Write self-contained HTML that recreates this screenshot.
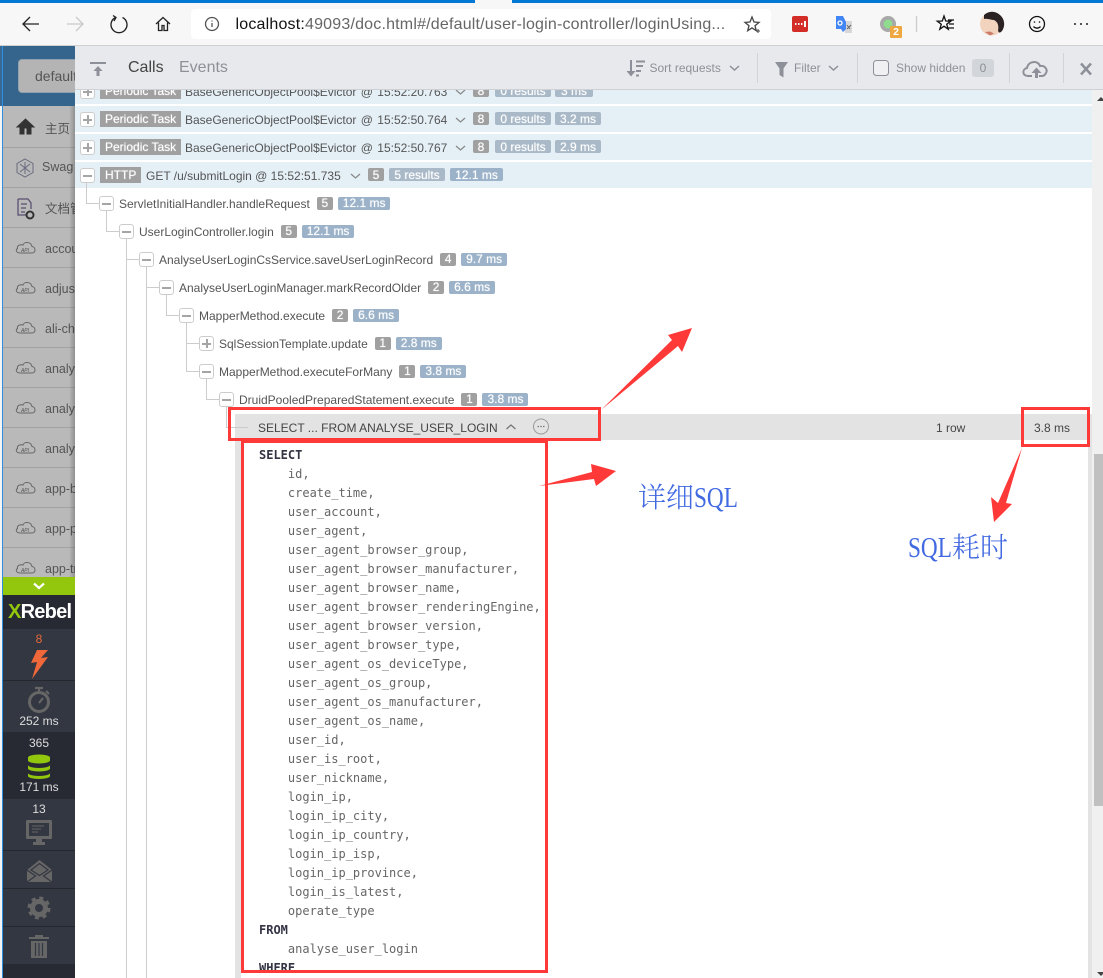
<!DOCTYPE html>
<html><head><meta charset="utf-8"><style>
html,body{margin:0;padding:0;background:#fff}
#p{position:relative;width:1103px;height:978px;overflow:hidden;font-family:"Liberation Sans","Noto Sans CJK SC",sans-serif;font-size:12px;color:#555;background:#fff}
.a{position:absolute;white-space:nowrap}
.r{position:absolute;left:75px;width:1017px;height:26px;background:#e4eff6}
.t{position:absolute;white-space:nowrap;font-size:12px;line-height:14px;color:#555}
.b{position:absolute;top:0;height:13px;line-height:14px;border-radius:2px;padding:0 5px;font-size:12px;color:#fff;background:#a0a0a0;text-shadow:0 0 1px rgba(255,255,255,.7);text-align:center;box-sizing:border-box}
.bi{position:static;display:inline-block;vertical-align:1px;margin-left:4px;line-height:13px}
.n{width:16px;padding:0}
.g{background:#a9b9c8}
.s{background:#9bb2c9}
.tag{position:absolute;background:#a0a0a0;color:#fff;height:16px;line-height:16px;padding:0 5px;text-shadow:0 0 1px rgba(255,255,255,.7);font-size:12px;white-space:nowrap}
.tg{position:absolute;width:15px;height:15px;border:1px solid #ccc;border-radius:3px;background:#fff;box-sizing:border-box}
.tg:before{content:"";position:absolute;left:2px;right:2px;top:5.5px;height:2px;background:#a5a5a5}
.pl:after{content:"";position:absolute;top:2px;bottom:2px;left:5.5px;width:2px;background:#a5a5a5}
.v{position:absolute;width:1px;background:#ccc}
.h{position:absolute;height:1px;background:#ccc}
.it{position:absolute;left:3px;width:72px;height:39px;border-bottom:1px solid #a2a2a2;overflow:hidden}
.it span{position:absolute;left:42px;top:14px;font-size:12.5px;color:#555;white-space:nowrap}
.sql{position:absolute;left:259px;font:12px/19px "DejaVu Sans Mono","Liberation Mono",monospace;color:#666;white-space:pre;margin:0}
.sql b{font-weight:bold;color:#334}
.red{position:absolute;border:3px solid #ff3838;box-sizing:border-box}
.cn{position:absolute;font-family:"Noto Serif CJK SC",serif;font-size:28px;line-height:36px;color:#4169e1;white-space:nowrap;font-weight:300}
.cn i{display:inline-block;width:44px;font:28px/36px "Liberation Serif",serif;transform:scaleX(.83);transform-origin:left center}
.lab{position:absolute;width:72px;left:3px;text-align:center;color:#ddd;font-size:12px;line-height:14px}
</style></head><body><div id="p">

<!-- browser chrome -->
<div class="a" style="left:0;top:0;width:1103px;height:3px;background:#0078d4"></div>
<div class="a" style="left:475px;top:0;width:37px;height:3px;background:#f7f7f7"></div>
<div class="a" style="left:0;top:3px;width:1103px;height:43px;background:#f7f7f7;border-bottom:1px solid #d0d0d0;box-sizing:border-box"></div>
<div class="a" style="left:191px;top:9px;width:580px;height:30px;background:#fff;border-radius:4px"></div>
<div class="a" style="left:235.500px;top:15px;font-size:16px;line-height:20px;color:#666;letter-spacing:.19px"><span style="color:#111">localhost:</span>49093/doc.html#/default/user-login-controller/loginUsing...</div>
<svg class="a" style="left:0;top:0" width="1103" height="46" fill="none" stroke="#222" stroke-width="1.3">
<path d="M39 24H23M30 17l-7 7 7 7"/>
<path d="M83 24H67M76 17l7 7-7 7" stroke="#c8c8c8"/>
<path d="M115.500 17.500a8 8 0 1 0 7 0M113 15.500l3 2-2 3.500"/>
<path d="M156 24l7-6.500 7 6.500M158.500 22.500v8h3.500v-5h2v5h3.500v-8"/>
<circle cx="212" cy="24" r="6.500" stroke="#555"/><path d="M212 23v4M212 20.500v1" stroke="#555"/>
<path d="M752 17l2 5 5 .4-4 3.300 1.300 5-4.300-2.800-4.300 2.800 1.300-5-4-3.300 5-.4z" stroke="#444"/><path d="M758 29v4M756 31h4" stroke="#444" stroke-width="1"/>
<rect x="792" y="16" width="16" height="16" rx="2" fill="#d32d27" stroke="none"/>
<path d="M795 24h1.500M798 24h1.500M801 24h1.500M805 21v6" stroke="#fff" stroke-width="2"/>
<path d="M843 21h9v12h-7z" fill="#d8d8d8" stroke="none"/><path d="M836 16h7l3 6v7l-3 3-2-3h-5z" fill="#4285f4" stroke="none"/><circle cx="840" cy="23" r="2" stroke="#fff"/><path d="M847 25l3 4M851 25l-4 4" stroke="#666" stroke-width="1"/>
<circle cx="888" cy="24" r="8" fill="#a8a8a8" stroke="none"/><circle cx="888" cy="24" r="4.500" fill="#8fdc8f" stroke="none"/>
<rect x="890" y="26" width="12" height="12" rx="1" fill="#eea83f" stroke="none"/>
<path d="M916.500 16v16" stroke="#ccc"/>
<path d="M944 16l1.700 5 5 .2-4 3 1.500 5-4.200-3-4.200 3 1.500-5-4-3 5-.2z" fill="#fff" stroke="#111"/><path d="M948 20h6M949 24h5M948 28h6" stroke="#111"/>
<circle cx="991.500" cy="24" r="11.500" fill="#f2d3bd" stroke="none"/><path d="M984 15a11.500 11.500 0 0 1 16 0 12 12 0 0 1 2 16c-3 3-3 1-4 0 1-5 0-9-4-11-3 0-7-2-10-1z" fill="#2a2223" stroke="none"/><path d="M985 32l5 3.500 4-2-4-2z" fill="#cc7a6a" stroke="none"/>
<circle cx="1037" cy="24" r="7.500" stroke="#111"/><circle cx="1034.500" cy="22" r=".8" fill="#111" stroke="none"/><circle cx="1039.500" cy="22" r=".8" fill="#111" stroke="none"/><path d="M1033.500 26.500a4.500 4.500 0 0 0 7 0" stroke="#111"/>
<circle cx="1075" cy="24" r="1" fill="#222" stroke="none"/><circle cx="1081" cy="24" r="1" fill="#222" stroke="none"/><circle cx="1087" cy="24" r="1" fill="#222" stroke="none"/>
</svg>
<div class="a" style="left:890px;top:26px;width:12px;height:12px;color:#fff;font:bold 10.5px/12px 'Liberation Sans',sans-serif;text-align:center;">2</div>

<!-- sidebar -->
<div class="a" style="left:0;top:46px;width:75px;height:60px;background:#35648c"></div>
<div class="a" style="left:18px;top:59px;width:70px;height:34px;border-radius:4px;background:#b4b4b4;border:1px solid #8fa0ae;box-sizing:border-box"></div>
<div class="a" style="left:35px;top:67px;font-size:14px;line-height:18px;color:#555">default</div>
<div class="a" style="left:3px;top:106px;width:72px;height:471px;background:#b9b9b9"></div>
<div class="it" style="top:108px"><span style="left:42px;top:10px">主页</span></div>
<div class="it" style="top:148px"><span style="left:39px;top:12px">Swag</span></div>
<div class="it" style="top:188px"><span style="left:42px;top:10px">文档管</span></div>
<div class="it" style="top:228px"><span>accou</span></div>
<div class="it" style="top:268px"><span>adjust</span></div>
<div class="it" style="top:308px"><span>ali-che</span></div>
<div class="it" style="top:348px"><span>analys</span></div>
<div class="it" style="top:388px"><span>analys</span></div>
<div class="it" style="top:428px"><span>analys</span></div>
<div class="it" style="top:468px"><span>app-b</span></div>
<div class="it" style="top:508px"><span>app-p</span></div>
<div class="it" style="top:548px;border:0"><span>app-tr</span></div>
<svg class="a" style="left:0;top:106px" width="75" height="471" fill="none" stroke="#666" stroke-width="1">
<path d="M17 21l8.500-8 8.500 8h-3v7h-4v-6h-3v6h-4v-7z" fill="#333" stroke="#333"/>
<path d="M25 53l8 4.500v9l-8 4.500-8-4.500v-9zM20 58l10 8M30 58l-10 8M25 56v12" stroke="#6a6a80"/>
<path d="M18 93h10l3 4v6M18 93v16h8M21 98h6M21 102h5M21 106h4" stroke="#5c4f70" stroke-width="1.300"/><circle cx="30" cy="109" r="3.500" stroke="#333" stroke-width="2"/>
<g id="cl">
<path d="M20 147h12c4 0 4-6 0-6.500-1-5-8-5-9-1.500-4-1-6 1-5.500 3.500-2 1-1.500 4.500 2.500 4.500z"/>
<path d="M20 187h12c4 0 4-6 0-6.500-1-5-8-5-9-1.500-4-1-6 1-5.500 3.500-2 1-1.500 4.500 2.500 4.500z"/>
<path d="M20 227h12c4 0 4-6 0-6.500-1-5-8-5-9-1.500-4-1-6 1-5.500 3.500-2 1-1.500 4.500 2.500 4.500z"/>
<path d="M20 267h12c4 0 4-6 0-6.500-1-5-8-5-9-1.500-4-1-6 1-5.500 3.500-2 1-1.500 4.500 2.500 4.500z"/>
<path d="M20 307h12c4 0 4-6 0-6.500-1-5-8-5-9-1.500-4-1-6 1-5.500 3.500-2 1-1.500 4.500 2.500 4.500z"/>
<path d="M20 347h12c4 0 4-6 0-6.500-1-5-8-5-9-1.500-4-1-6 1-5.500 3.500-2 1-1.500 4.500 2.500 4.500z"/>
<path d="M20 387h12c4 0 4-6 0-6.500-1-5-8-5-9-1.500-4-1-6 1-5.500 3.500-2 1-1.500 4.500 2.500 4.500z"/>
<path d="M20 427h12c4 0 4-6 0-6.500-1-5-8-5-9-1.500-4-1-6 1-5.500 3.500-2 1-1.500 4.500 2.500 4.500z"/>
<path d="M20 467h12c4 0 4-6 0-6.500-1-5-8-5-9-1.500-4-1-6 1-5.500 3.500-2 1-1.500 4.500 2.500 4.500z"/>
</g>
<g font-family="Liberation Sans" font-size="5" font-style="italic" fill="#555" stroke="none" text-anchor="middle">
<text x="25" y="146">API</text><text x="25" y="186">API</text><text x="25" y="226">API</text><text x="25" y="266">API</text><text x="25" y="306">API</text><text x="25" y="346">API</text><text x="25" y="386">API</text><text x="25" y="426">API</text><text x="25" y="466">API</text>
</g>
</svg>
<div class="a" style="left:69px;top:106px;width:6px;height:471px;background:linear-gradient(to right,rgba(0,0,0,0),rgba(0,0,0,.22))"></div>
<div class="a" style="left:0;top:46px;width:2px;height:60px;background:#3a6a94"></div>
<div class="a" style="left:0;top:106px;width:2px;height:872px;background:#f4f4f4"></div>
<div class="a" style="left:2px;top:46px;width:1px;height:932px;background:#2e8fe0"></div>

<!-- XRebel -->
<div class="a" style="left:3px;top:594px;width:72px;height:384px;background:#333741"></div>
<div class="a" style="left:3px;top:595px;width:72px;height:34px;background:#272a32"></div>
<div class="a" style="left:3px;top:577px;width:72px;height:18px;background:#92c70e"></div>
<svg class="a" style="left:3px;top:577px" width="72" height="18" fill="none" stroke="#fff" stroke-width="2.200"><path d="M31 6.500l5 4.500 5-4.500"/></svg>
<div class="a" style="left:8px;top:601px;font:bold 20px/22px 'Liberation Sans',sans-serif;color:#fff;letter-spacing:-.75px"><span style="color:#92c70e">X</span>Rebel</div>
<div class="a" style="left:3px;top:680px;width:72px;height:1px;background:#24272e"></div>
<div class="a" style="left:3px;top:732px;width:72px;height:67px;background:#272a32"></div>
<div class="a" style="left:3px;top:850px;width:72px;height:1px;background:#24272e"></div>
<div class="a" style="left:3px;top:888px;width:72px;height:1px;background:#24272e"></div>
<div class="a" style="left:3px;top:926px;width:72px;height:1px;background:#24272e"></div>
<div class="a" style="left:3px;top:964px;width:72px;height:14px;background:#272a32"></div>
<div class="lab" style="top:632px;color:#e8683a;">8</div>
<div class="lab" style="top:714px;">252 ms</div>
<div class="lab" style="top:736px;">365</div>
<div class="lab" style="top:780px;">171 ms</div>
<div class="lab" style="top:802px;">13</div>
<svg class="a" style="left:0;top:594px" width="75" height="384" fill="none">
<path d="M48 56H37l-6 13 6-1-5 17 16-22-7 1z" fill="#f0673a"/>
<circle cx="39" cy="108" r="9.500" stroke="#666" stroke-width="3"/><path d="M35 94h8M39 94v4M46 97l3 3M43 104l-4 5" stroke="#666" stroke-width="2.200"/>
<path d="M28 163.500a11 3 0 0 1 22 0v3a11 3 0 0 1-22 0zM28 171a11 3 0 0 0 22 0v3.500a11 3 0 0 1-22 0zM28 179a11 3 0 0 0 22 0v3a11 3 0 0 1-22 0z" fill="#92c70e"/>
<rect x="26" y="226" width="26" height="19" rx="1" fill="#666"/><rect x="29" y="229" width="20" height="13" fill="#333741"/><path d="M32 232h12M32 235h9M32 238h6" stroke="#666"/><path d="M36 245h6v3h3v3H33v-3h3z" fill="#666"/>
<path d="M27 276l12.500-10 12.500 10v12H27z" fill="#666"/><path d="M31 276l8.500-6.500 8.500 6.500-8.500 5.500zM27 276l8.500 6-8.500 6M52 276l-8.500 6 8.500 6" stroke="#333741" stroke-width="1.200"/>
<circle cx="39" cy="314" r="6.500" stroke="#666" stroke-width="5"/><circle cx="39" cy="314" r="10" stroke="#666" stroke-width="3" stroke-dasharray="4 3.850"/>
<path d="M29 343h20v2H29zM35 341h8v2h-8zM31 347h16v17H31z" fill="#666"/><path d="M35.500 349v13M39 349v13M42.500 349v13" stroke="#333741" stroke-width="1.200"/>
</svg>

<!-- panel -->
<div class="a" style="left:75px;top:46px;width:1028px;height:932px;background:#fff"></div>

<div class="r" style="top:78px"></div>
<div class="r" style="top:106px"></div>
<div class="r" style="top:134px"></div>
<div class="r" style="top:162px"></div>
<div class="a" style="left:75px;top:104px;width:1017px;height:2px;background:#fff"></div>

<div class="t" style="left:0;top:84px;width:700px;height:14px">
<span class="tag" style="left:100px;top:-1px">Periodic Task</span><span class="a" style="left:185px;top:1px;word-spacing:1px">BaseGenericObjectPool$Evictor @ 15:52:20.763</span><span class="b n" style="left:473px">8</span><span class="b g" style="left:495px;width:56px;padding:0">0 results</span><span class="b g" style="left:555px;padding:0 6px">3 ms</span></div>
<div class="t" style="left:0;top:112px;width:700px;height:14px">
<span class="tag" style="left:100px;top:-1px">Periodic Task</span><span class="a" style="left:185px;top:1px;word-spacing:1px">BaseGenericObjectPool$Evictor @ 15:52:50.764</span><span class="b n" style="left:473px">8</span><span class="b g" style="left:495px;width:56px;padding:0">0 results</span><span class="b g" style="left:555px;width:46px;padding:0">3.2 ms</span></div>
<div class="t" style="left:0;top:140px;width:700px;height:14px">
<span class="tag" style="left:100px;top:-1px">Periodic Task</span><span class="a" style="left:185px;top:1px;word-spacing:1px">BaseGenericObjectPool$Evictor @ 15:52:50.767</span><span class="b n" style="left:473px">8</span><span class="b g" style="left:495px;width:56px;padding:0">0 results</span><span class="b g" style="left:555px;width:46px;padding:0">2.9 ms</span></div>
<div class="t" style="left:0;top:168px;width:700px;height:14px">
<span class="tag" style="left:100px;top:-1px">HTTP</span><span class="a" style="left:146px;top:1px">GET /u/submitLogin @ 15:52:51.735</span><span class="b n" style="left:368px">5</span><span class="b g" style="left:389px;width:56px;padding:0">5 results</span><span class="b s" style="left:450px;width:53px;padding:0">12.1 ms</span></div>
<svg class="a" style="left:0;top:0" width="500" height="190" fill="none" stroke="#888" stroke-width="1.200"><path d="M456 90l4.500 4 4.500-4M456 118l4.500 4 4.500-4M456 146l4.500 4 4.500-4M351 174l4.500 4 4.500-4"/></svg>

<!-- tree lines -->
<div class="v" style="left:86px;top:182px;height:22px"></div><div class="h" style="left:86px;top:203px;width:14px"></div>
<div class="v" style="left:106px;top:211px;height:21px"></div><div class="h" style="left:106px;top:231px;width:14px"></div>
<div class="v" style="left:126px;top:239px;height:739px"></div><div class="h" style="left:126px;top:259px;width:14px"></div>
<div class="v" style="left:146px;top:267px;height:711px"></div><div class="h" style="left:146px;top:287px;width:14px"></div>
<div class="v" style="left:166px;top:295px;height:21px"></div><div class="h" style="left:166px;top:315px;width:14px"></div>
<div class="v" style="left:186px;top:323px;height:49px"></div><div class="h" style="left:186px;top:343px;width:14px"></div><div class="h" style="left:186px;top:371px;width:14px"></div>
<div class="v" style="left:206px;top:379px;height:21px"></div><div class="h" style="left:206px;top:399px;width:14px"></div>
<div class="v" style="left:226px;top:407px;height:21px"></div><div class="h" style="left:226px;top:427px;width:22px"></div>

<div class="tg pl" style="left:80px;top:84px"></div>
<div class="tg pl" style="left:80px;top:112px"></div>
<div class="tg pl" style="left:80px;top:140px"></div>
<div class="tg" style="left:80px;top:168px"></div>
<div class="tg" style="left:99px;top:196px"></div>
<div class="tg" style="left:119px;top:224px"></div>
<div class="tg" style="left:139px;top:252px"></div>
<div class="tg" style="left:159px;top:280px"></div>
<div class="tg" style="left:179px;top:308px"></div>
<div class="tg pl" style="left:199px;top:336px"></div>
<div class="tg" style="left:199px;top:364px"></div>
<div class="tg" style="left:219px;top:392px"></div>

<!-- header -->
<div class="a" style="left:75px;top:46px;width:1028px;height:44px;background:#e8e9ed;border-bottom:1px solid #cfd0d4;box-sizing:border-box"></div>
<div class="a" style="left:128px;top:58px;font-size:16px;line-height:20px;color:#444">Calls</div>
<div class="a" style="left:179px;top:58px;font-size:16px;line-height:20px;color:#8d9098">Events</div>
<div class="a" style="left:649.500px;top:61px;font-size:12px;line-height:15px;color:#8d9098">Sort requests</div>
<div class="a" style="left:794px;top:61px;font-size:12px;line-height:15px;color:#8d9098">Filter</div>
<div class="a" style="left:896px;top:61px;font-size:12px;line-height:15px;color:#8d9098">Show hidden</div>
<div class="a" style="left:972px;top:59px;width:22px;height:18px;background:#d2d5da;border-radius:3px;text-align:center;line-height:18px;color:#8d9098">0</div>
<svg class="a" style="left:75px;top:46px" width="1028" height="44" fill="none" stroke="#8d9098" stroke-width="1.500">
<path d="M15 17h16" stroke-width="2"/><path d="M23 30v-8" stroke-width="3"/><path d="M18.500 25l4.500-5 4.500 5z" fill="#8d9098" stroke="none"/>
<path d="M556 14v15" stroke-width="2"/><path d="M551.500 25l4.500 5.500 4.500-5.500z" fill="#8d9098" stroke="none"/><path d="M561 15.500h9M561 20h7M561 25h5M561 29.500h3" stroke-width="2"/>
<path d="M655 20l4.500 4 4.500-4M754 20l4.500 4 4.500-4"/>
<path d="M700 16h13l-4.500 6.500v9l-4-2.500v-6.500z" fill="#8d9098" stroke="none"/>
<path d="M682.500 7v30M782.500 7v30M934.500 7v30M988.500 7v30" stroke="#d2d3d7" stroke-width="1"/>
<path d="M957 30h-4c-6 0-6-7-1-8 1-7 11-8 13-2 5-1 8 4 6 7-1 2-2 3-4 3h-3" stroke-width="2"/><path d="M961.500 32v-8" stroke-width="3"/><path d="M956.500 27l5-5.500 5 5.500z" fill="#8d9098" stroke="none"/>
<path d="M1006 17.500l10 11M1016 17.500l-10 11" stroke-width="2.500"/>
<rect x="798.500" y="14.500" width="15" height="15" rx="3" fill="#f0f0f3" stroke="#8d9098" stroke-width="1"/>
</svg>

<!-- scrollbar -->
<div class="a" style="left:1092px;top:90px;width:11px;height:888px;background:#f0f0f0"></div>
<div class="a" style="left:1088px;top:440px;width:4px;height:538px;background:#e3e3e3"></div>
<div class="a" style="left:1094px;top:454px;width:9px;height:352px;background:#c0c0c0"></div>
<svg class="a" style="left:1092px;top:96px" width="11" height="882"><path d="M5 5h8L9 1zM5 876h8l-4 4z" fill="#444"/></svg>

<div class="t" style="left:119px;top:197px">ServletInitialHandler.handleRequest<span class="b bi n" style="margin-left:7px">5</span><span class="b bi s" style="margin-left:5px">12.1 ms</span></div>
<div class="t" style="left:139px;top:225px">UserLoginController.login<span class="b bi n" style="margin-left:7px">5</span><span class="b bi s" style="margin-left:5px">12.1 ms</span></div>
<div class="t" style="left:159px;top:253px">AnalyseUserLoginCsService.saveUserLoginRecord<span class="b bi n" style="margin-left:7px">4</span><span class="b bi s" style="margin-left:5px">9.7 ms</span></div>
<div class="t" style="left:179px;top:281px">AnalyseUserLoginManager.markRecordOlder<span class="b bi n" style="margin-left:7px">2</span><span class="b bi s" style="margin-left:5px">6.6 ms</span></div>
<div class="t" style="left:199px;top:309px">MapperMethod.execute<span class="b bi n" style="margin-left:7px">2</span><span class="b bi s" style="margin-left:5px">6.6 ms</span></div>
<div class="t" style="left:219px;top:337px">SqlSessionTemplate.update<span class="b bi n" style="margin-left:7px">1</span><span class="b bi s" style="margin-left:5px">2.8 ms</span></div>
<div class="t" style="left:219px;top:365px">MapperMethod.executeForMany<span class="b bi n" style="margin-left:7px">1</span><span class="b bi s" style="margin-left:5px">3.8 ms</span></div>
<div class="t" style="left:239px;top:393px">DruidPooledPreparedStatement.execute<span class="b bi n" style="margin-left:7px">1</span><span class="b bi s" style="margin-left:5px">3.8 ms</span></div>

<!-- SQL row -->
<div class="a" style="left:235px;top:414px;width:857px;height:26px;background:#e3e3e3"></div>
<div class="a" style="left:235px;top:440px;width:6px;height:538px;background:#e3e3e3"></div>
<div class="h" style="left:235px;top:427px;width:13px;background:#ccc"></div>
<div class="t" style="left:258px;top:421px;color:#444">SELECT ... FROM ANALYSE_USER_LOGIN</div>
<div class="t" style="left:936px;top:421px;color:#444">1 row</div>
<div class="t" style="left:1034px;top:421px;color:#444">3.8 ms</div>
<svg class="a" style="left:500px;top:414px" width="60" height="26" fill="none" stroke="#777"><path d="M6.500 15l4.500-4 4.500 4" stroke-width="1.300"/><circle cx="41" cy="12.500" r="7.500" stroke="#999"/><path d="M37.500 12.500h1.500M40.300 12.500h1.500M43 12.500h1.500" stroke-width="1.300"/></svg>

<pre class="sql" style="top:446px"><b>SELECT</b>
    id,
    create_time,
    user_account,
    user_agent,
    user_agent_browser_group,
    user_agent_browser_manufacturer,
    user_agent_browser_name,
    user_agent_browser_renderingEngine,
    user_agent_browser_version,
    user_agent_browser_type,
    user_agent_os_deviceType,
    user_agent_os_group,
    user_agent_os_manufacturer,
    user_agent_os_name,
    user_id,
    user_is_root,
    user_nickname,
    login_ip,
    login_ip_city,
    login_ip_country,
    login_ip_isp,
    login_ip_province,
    login_is_latest,
    operate_type
<b>FROM</b>
    analyse_user_login
<b>WHERE</b></pre>
<div class="a" style="left:241px;top:971px;width:310px;height:7px;background:#fff"></div>

<!-- annotations -->
<div class="red" style="left:228px;top:407px;width:373px;height:34px"></div>
<div class="red" style="left:1021px;top:407px;width:69px;height:40px"></div>
<div class="red" style="left:241px;top:440px;width:307px;height:533px"></div>
<svg class="a" style="left:0;top:0" width="1103" height="978" fill="#ff3838">
<path d="M601 410L672 340 668 335 692 328 682 352 678 346z"/>
<path d="M539 486L592 472 591 464 616 471 596 486 594 479z"/>
<path d="M1022 448L1006 503 1012 504 994 522 991 497 998 503z"/>
</svg>
<div class="cn" style="left:638px;top:478px">详细<i>SQL</i></div>
<div class="cn" style="left:908px;top:528px"><i>SQL</i>耗时</div>
</div></body></html>
